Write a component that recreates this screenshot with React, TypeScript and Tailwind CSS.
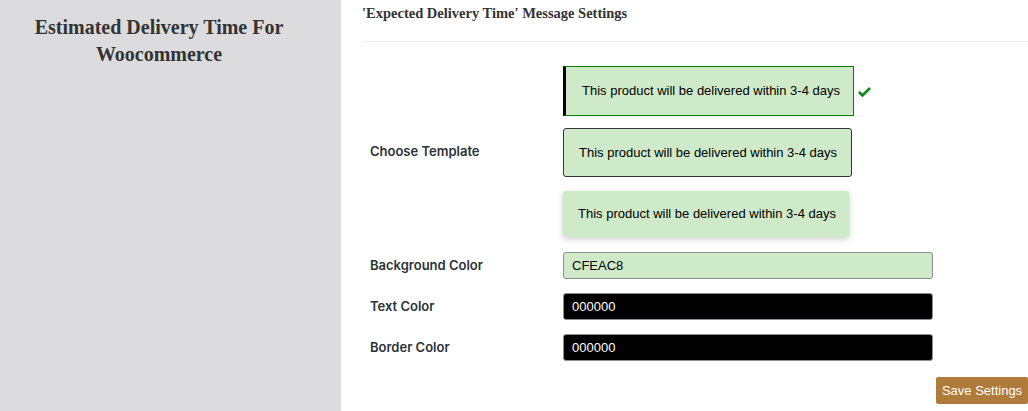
export default function App() {
  const msg = "This product will be delivered within 3-4 days";
  return (
    <div className="flex h-[411px] w-[1028px] overflow-hidden bg-white">
      <aside className="w-[341px] shrink-0 bg-[#dcdcde] pr-[23px] pt-[14px]">
        <h1 className="text-center font-['Liberation_Serif',serif] text-[20px] font-bold leading-[27px] text-[#333]">
          Estimated Delivery Time For
          <br />
          Woocommerce
        </h1>
      </aside>
      <main className="flex-1 pl-[21px]">
        <h2 className="pt-[5px] pb-[19px] font-['Liberation_Serif',serif] text-[14.5px] font-bold leading-[17px] text-[#333] border-b border-[#eeeeee]">
          'Expected Delivery Time' Message Settings
        </h2>
        <div className="flex pt-[24px]">
          <div className="flex w-[201px] items-center pl-[8px] font-['Inter',sans-serif] text-[13px] font-semibold text-[#2c3338]">
            Choose Template
          </div>
          <div className="flex flex-col">
            <div className="flex items-center">
              <div className="flex h-[50px] w-[291px] items-center rounded-[1px] border border-l-[3px] border-[#008000] border-l-black bg-[#cfeac8] pl-[16px] font-['Liberation_Sans',sans-serif] text-[13px] text-black">
                {msg}
              </div>
              <svg className="ml-[4px]" width="13" height="11" viewBox="0 0 13 11">
                <path d="M1 6 L4.5 9.5 L12 2" stroke="#0a8a1a" strokeWidth="2.6" fill="none" strokeLinejoin="miter" />
              </svg>
            </div>
            <div className="mt-[12px] flex h-[49px] w-[289px] items-center rounded-[3px] border border-[#333] bg-[#cfeac8] pl-[15px] font-['Liberation_Sans',sans-serif] text-[13px] text-black">
              {msg}
            </div>
            <div className="mt-[14px] flex h-[46px] w-[286px] items-center rounded-[3px] bg-[#cfeac8] pl-[15px] font-['Liberation_Sans',sans-serif] text-[13px] text-black shadow-[0_2px_6px_rgba(0,0,0,0.2)]">
              {msg}
            </div>
          </div>
        </div>
        <div className="mt-[15px] flex flex-col gap-[14px]">
          <Row label="Background Color" value="CFEAC8" bg="bg-[#cfeac8]" text="text-black" />
          <Row label="Text Color" value="000000" bg="bg-black" text="text-white" />
          <Row label="Border Color" value="000000" bg="bg-black" text="text-white" />
        </div>
        <div className="mt-[16px] flex justify-end">
          <button className="h-[27px] w-[92px] rounded-[2px] bg-[#b07a3a] font-['Liberation_Sans',sans-serif] text-[13px] text-white">
            Save Settings
          </button>
        </div>
      </main>
    </div>
  );
}

function Row(props: { label: string; value: string; bg: string; text: string }) {
  return (
    <div className="flex items-center">
      <div className="w-[201px] pl-[8px] font-['Inter',sans-serif] text-[13px] font-semibold text-[#2c3338]">
        {props.label}
      </div>
      <div
        className={`flex h-[27px] w-[370px] items-center rounded-[3px] border border-[#8c8f94] pl-[8px] font-['Liberation_Sans',sans-serif] text-[13px] ${props.bg} ${props.text}`}
      >
        {props.value}
      </div>
    </div>
  );
}
